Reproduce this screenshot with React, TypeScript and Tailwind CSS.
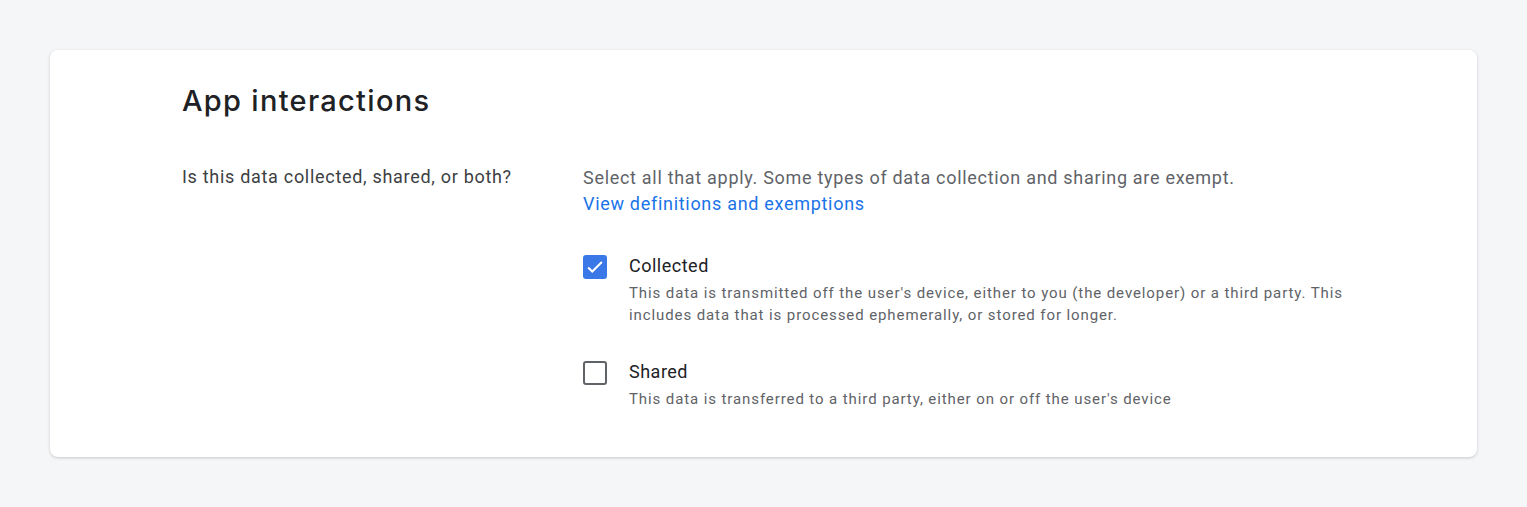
import { useState } from "react";

type Option = {
  id: string;
  label: string;
  description: string;
};

const options: Option[] = [
  {
    id: "collected",
    label: "Collected",
    description:
      "This data is transmitted off the user's device, either to you (the developer) or a third party. This includes data that is processed ephemerally, or stored for longer.",
  },
  {
    id: "shared",
    label: "Shared",
    description: "This data is transferred to a third party, either on or off the user's device",
  },
];

function Checkbox({ checked, onClick }: { checked: boolean; onClick: () => void }) {
  return (
    <button
      type="button"
      onClick={onClick}
      className={
        checked
          ? "mt-[1px] flex h-[24px] w-[24px] shrink-0 items-center justify-center rounded-[3px] bg-[#3a78e8]"
          : "mt-[1px] h-[24px] w-[24px] shrink-0 rounded-[3px] border-2 border-[#5f6368] bg-white"
      }
    >
      {checked && (
        <svg viewBox="0 0 24 24" className="h-[22px] w-[22px]" fill="none" stroke="white" strokeWidth="2.2">
          <path d="M4.5 12.5l4.5 4.5L19.5 6.5" />
        </svg>
      )}
    </button>
  );
}

export default function App() {
  const [selected, setSelected] = useState<string[]>(["collected"]);

  const toggle = (id: string) => {
    setSelected((s) => (s.includes(id) ? s.filter((x) => x !== id) : [...s, id]));
  };

  return (
    <div className="min-h-[507px] bg-[#f5f6f8] px-[50px] pt-[50px] pb-[50px] font-['Roboto',sans-serif] tracking-[0.7px]">
      <div className="rounded-[8px] bg-white pl-[132px] pt-[33px] pb-[47px] shadow-[0_1px_3px_rgba(60,64,67,0.25)]">
        <h1 className="text-[29px] leading-[36px] font-medium text-[#202124] font-['Inter',sans-serif] tracking-[1.3px]">
          App interactions
        </h1>

        <div className="mt-[46px] flex">
          <div className="w-[401px] shrink-0 text-[18px] leading-[24px] text-[#3c4043]">
            Is this data collected, shared, or both?
          </div>

          <div>
            <p className="text-[18px] leading-[26px] text-[#5f6368]">
              Select all that apply. Some types of data collection and sharing are exempt.
            </p>
            <a href="#" className="block text-[18px] leading-[26px] text-[#1a73e8]">
              View definitions and exemptions
            </a>

            <div className="mt-[37px] flex flex-col gap-[34px]">
              {options.map((opt) => (
                <div key={opt.id} className="flex gap-[22px]">
                  <Checkbox checked={selected.includes(opt.id)} onClick={() => toggle(opt.id)} />
                  <div>
                    <div className="text-[18px] leading-[24px] tracking-[0.5px] text-[#202124]">{opt.label}</div>
                    <p className="mt-[4px] max-w-[730px] text-[15px] leading-[22px] tracking-[0.9px] text-[#5f6368]">
                      {opt.description}
                    </p>
                  </div>
                </div>
              ))}
            </div>
          </div>
        </div>
      </div>
    </div>
  );
}
